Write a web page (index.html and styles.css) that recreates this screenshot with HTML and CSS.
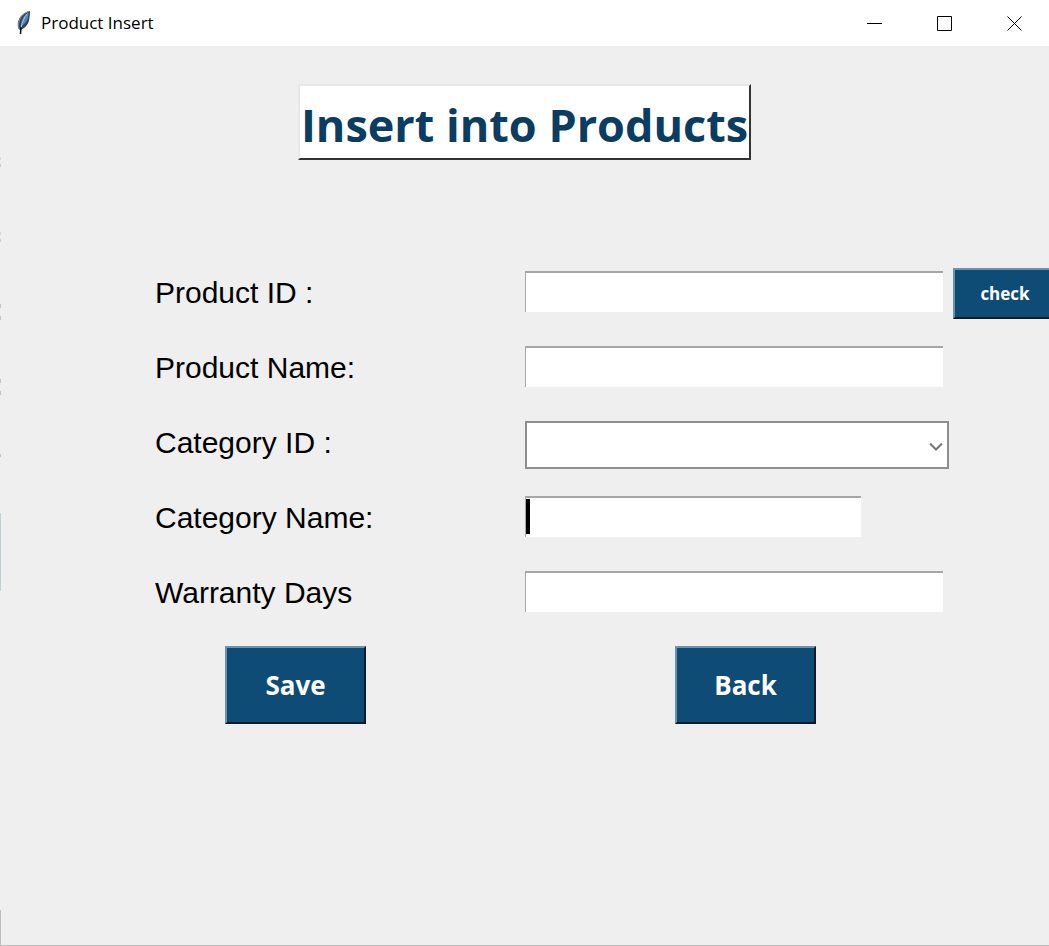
FILE: index.html
```html
<!DOCTYPE html>
<html lang="en">
<head>
<meta charset="utf-8">
<title>Product Insert</title>
<link rel="stylesheet" href="styles.css">
</head>
<body>
<div class="window">
  <header class="titlebar">
    <svg class="feather" width="16" height="26" viewBox="0 0 16 26" aria-hidden="true">
      <path d="M14 1C9.500 1.500 4.500 5 2.500 10.500c-1.200 4-1 7 .5 9l1.500.5c4-1.500 7.500-5 8.500-9.500.8-3.500 1-6.500 1-9.500z" fill="#3a4450"/>
      <path d="M12.500 3C8.500 5 6 8.500 5.200 13l-.4 3.500C8 14.500 10.500 12 11.500 9c.8-2 1-4 1-6z" fill="#4a86cc"/>
      <path d="M11.500 3.500C8 7 6.500 12 5 18" fill="none" stroke="#a9c8ea" stroke-width="1"/>
      <path d="M13.500 1.500C8.500 2.500 4.500 6 3.200 11c-1 3-1 6 0 8" fill="none" stroke="#8b8f94" stroke-width="1"/>
      <path d="M5 17l-.5 7" fill="none" stroke="#111" stroke-width="1.500"/>
    </svg>
    <span class="caption">Product Insert</span>
    <div class="window-controls">
      <button class="control" type="button" aria-label="Minimize"><svg width="15" height="15" viewBox="0 0 15 15"><path d="M0 7.500h15"/></svg></button>
      <button class="control" type="button" aria-label="Maximize"><svg width="15" height="15" viewBox="0 0 15 15"><path d="M.5.500h14v14H.5z"/></svg></button>
      <button class="control" type="button" aria-label="Close"><svg width="15" height="15" viewBox="0 0 15 15"><path d="M.5.500l14 14M14.500.500l-14 14"/></svg></button>
    </div>
  </header>
  <main class="content">
    <h1 class="heading">Insert into Products</h1>
    <form class="form">
      <div class="row">
        <label class="label" for="product-id">Product ID :</label>
        <input class="entry" id="product-id" type="text">
        <button class="button check" type="button">check</button>
      </div>
      <div class="row">
        <label class="label" for="product-name">Product Name:</label>
        <input class="entry" id="product-name" type="text">
      </div>
      <div class="row">
        <label class="label" for="category-id">Category ID :</label>
        <div class="combo">
          <select class="select" id="category-id"><option value=""></option></select>
          <svg class="chevron" width="14" height="10" viewBox="0 0 14 10" aria-hidden="true"><path d="M1 1.500l6 6 6-6"/></svg>
        </div>
      </div>
      <div class="row">
        <label class="label" for="category-name">Category Name:</label>
        <div class="focused">
          <input class="entry short" id="category-name" type="text">
          <span class="caret"></span>
        </div>
      </div>
      <div class="row">
        <label class="label" for="warranty">Warranty Days</label>
        <input class="entry" id="warranty" type="text">
      </div>
      <div class="actions">
        <button class="button action" type="button">Save</button>
        <button class="button action" type="button">Back</button>
      </div>
    </form>
  </main>
</div>
</body>
</html>
```
FILE: styles.css
```css
* {
  box-sizing: border-box;
}

body {
  margin: 0;
  font-family: "Open Sans", "Noto Sans", sans-serif;
  color: #000;
  background: #efefef;
}

.window {
  position: relative;
  display: flex;
  flex-direction: column;
  min-height: 100vh;
  overflow: hidden;
  border-bottom: 1px solid #bdbdbd;
}

/* Slivers of the window behind, along the left edge */
.window::before {
  content: "";
  position: absolute;
  left: 0;
  top: 0;
  bottom: 0;
  width: 1px;
  background:
    linear-gradient(#c4dcec, #c4dcec) 0 157px / 1px 3px no-repeat,
    linear-gradient(#b5d3e8, #b5d3e8) 0 164px / 1px 3px no-repeat,
    linear-gradient(#c4dcec, #c4dcec) 0 232px / 1px 3px no-repeat,
    linear-gradient(#b5d3e8, #b5d3e8) 0 239px / 1px 3px no-repeat,
    linear-gradient(#c9c2bd, #c9c2bd) 0 304px / 1px 4px no-repeat,
    linear-gradient(#c9c2bd, #c9c2bd) 0 316px / 1px 4px no-repeat,
    linear-gradient(#c9c2bd, #c9c2bd) 0 379px / 1px 4px no-repeat,
    linear-gradient(#c9c2bd, #c9c2bd) 0 391px / 1px 4px no-repeat,
    linear-gradient(#c4c4c4, #c4c4c4) 0 454px / 1px 3px no-repeat,
    linear-gradient(#c3d0d9, #c3d0d9) 0 513px / 1px 78px no-repeat,
    linear-gradient(#bdbdbd, #bdbdbd) 0 100% / 1px 35px no-repeat;
}

.titlebar {
  display: flex;
  align-items: center;
  height: 46px;
  padding-left: 16px;
  background: #fff;
}

.feather {
  margin-right: 9px;
}

.caption {
  font-size: 17px;
  line-height: 24px;
}

.window-controls {
  display: flex;
  align-self: stretch;
  margin-left: auto;
}

.control {
  display: grid;
  place-items: center;
  width: 70px;
  padding: 0;
  border: 0;
  background: none;
}

.control path {
  fill: none;
  stroke: #000;
  stroke-width: 1;
}

.content {
  display: flex;
  flex-direction: column;
  padding-top: 38px;
}

.heading {
  align-self: center;
  margin: 0 0 108px;
  padding: 7px 1px 1px;
  border: 2px solid;
  border-color: #e8e8e8 #333 #333 #e8e8e8;
  background: #fff;
  color: #0b3c61;
  font-size: 45px;
  font-weight: 700;
  line-height: 64px;
}

.form {
  padding-left: 155px;
}

.row {
  display: flex;
  align-items: flex-start;
  height: 75px;
  padding-top: 3px;
}

.label {
  flex: 0 0 370px;
  padding-top: 2px;
  font-family: "Liberation Sans", Arial, sans-serif;
  font-size: 30px;
  line-height: 40px;
}

.entry {
  flex: none;
  width: 418px;
  height: 41px;
  padding: 2px 4px;
  border: solid #a6a6a6;
  border-width: 2px 0 0 1px;
  background: #fff;
  font-family: "Liberation Sans", Arial, sans-serif;
  font-size: 30px;
  outline: 0;
}

.short {
  display: block;
  width: 336px;
}

.combo,
.focused {
  position: relative;
}

.select {
  display: block;
  width: 424px;
  height: 48px;
  border: 2px solid #8e8e8e;
  border-radius: 0;
  background: #fff;
  appearance: none;
  outline: 0;
}

.chevron {
  position: absolute;
  right: 6px;
  top: 21px;
  fill: none;
  stroke: #757575;
  stroke-width: 2;
  pointer-events: none;
}

.caret {
  position: absolute;
  left: 1px;
  top: 3px;
  width: 4px;
  height: 35px;
  background: #000;
}

.button {
  border: 2px solid;
  border-color: #6c93ae #0a1c2a #0a1c2a #6c93ae;
  background: #0f4c75;
  color: #fff;
  font-family: inherit;
  font-weight: 700;
}

.check {
  flex: none;
  width: 104px;
  height: 51px;
  margin: -3px 0 0 10px;
  padding: 0;
  font-size: 17px;
}

.actions {
  display: grid;
  grid-template-columns: 450px 141px;
  padding: 3px 0 0 70px;
}

.action {
  width: 141px;
  height: 78px;
  padding: 0;
  font-size: 26px;
}
```
